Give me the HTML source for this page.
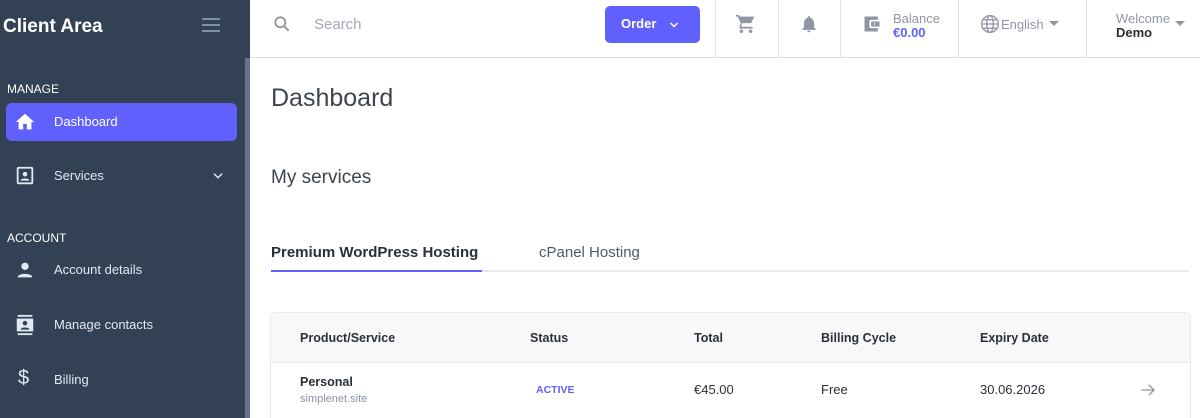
<!DOCTYPE html>
<html style="width:1200px;height:418px;overflow:hidden"><head><meta charset="utf-8"><style>
*{margin:0;padding:0;box-sizing:border-box}
body{width:1200px;height:418px;overflow:hidden;font-family:"Liberation Sans",sans-serif;background:#fff;position:relative}
.sb{position:absolute;left:0;top:0;width:250px;height:418px;background:#334155;color:#e2e8f0}
.sb .scroll{position:absolute;left:245px;top:58px;width:5px;height:360px;background:#64748b}
.logo{position:absolute;left:3px;top:16px;font-size:19px;font-weight:bold;color:#fff}
.ham{position:absolute;left:202px;top:18px;width:18px}
.ham i{display:block;height:2px;background:#7b8eab;margin-bottom:4px}
.sec{position:absolute;left:7px;font-size:12px;color:#fff}
.item{position:absolute;left:6px;width:231px;height:38px;border-radius:6px;font-size:13px;color:#e2e8f0}
.item span{position:absolute;left:48px;top:11px}
.item svg{position:absolute;left:8px;top:8px}
.active{background:#6061fd;color:#fff}
.top{position:absolute;left:250px;top:0;width:950px;height:58px;border-bottom:1px solid #dde3ec}
.vl{position:absolute;top:0;width:1px;height:58px;background:#dde3ec}
.t{position:absolute;color:#9096a6;font-size:13px}
.order{position:absolute;left:355px;top:6px;width:95px;height:37px;background:#6061fd;border-radius:5px;color:#fff;font-size:13px;font-weight:bold}
h1{position:absolute;left:271px;top:84px;font-size:25px;font-weight:normal;color:#3f4450}
h2{position:absolute;left:271px;top:167px;font-size:19px;font-weight:normal;color:#3f4450}
.tab{position:absolute;top:244px;font-size:15px;color:#52586a}
.card{position:absolute;left:270px;top:312px;width:921px;height:106px;border:1px solid #e6e9ef;border-bottom:none;border-radius:5px 5px 0 0;overflow:hidden}
.th{height:50px;background:#f8f8f9;border-bottom:1px solid #e6e9ef;position:relative}
.c{position:absolute;font-size:12.5px;color:#2b2f3a}
</style></head><body>
<div class="sb">
<div class="scroll"></div>
<div class="logo">Client Area</div>
<div class="ham"><i></i><i></i><i></i></div>
<div class="sec" style="top:82px">MANAGE</div>
<div class="item active" style="top:103px"><svg width="22" height="22" viewBox="0 0 24 24"><path d="M10 20v-6h4v6h5v-8h3L12 3 2 12h3v8z" fill="#fff"/></svg><span>Dashboard</span></div>
<div class="item" style="top:157px"><svg width="22" height="22" viewBox="0 0 24 24"><rect x="4" y="3" width="16" height="17" rx="1" fill="none" stroke="#e2e8f0" stroke-width="2"/><circle cx="12" cy="10" r="2.5" fill="#e2e8f0"/><path d="M7 17c1-3 9-3 10 0z" fill="#e2e8f0"/></svg><span>Services</span><svg style="left:205px;top:12px" width="14" height="14" viewBox="0 0 24 24"><path d="M5 8l7 7 7-7" fill="none" stroke="#e2e8f0" stroke-width="2.5"/></svg></div>
<div class="sec" style="top:231px">ACCOUNT</div>
<div class="item" style="top:251px"><svg width="22" height="22" viewBox="0 0 24 24"><circle cx="12" cy="8" r="4" fill="#e2e8f0"/><path d="M4 20c0-5 16-5 16 0z" fill="#e2e8f0"/></svg><span>Account details</span></div>
<div class="item" style="top:306px"><svg width="22" height="22" viewBox="0 0 24 24"><rect x="3" y="5" width="18" height="14" fill="#e2e8f0"/><rect x="4" y="1" width="16" height="2" fill="#e2e8f0"/><rect x="4" y="21" width="16" height="2" fill="#e2e8f0"/><circle cx="12" cy="10" r="2.5" fill="#334155"/><path d="M7 17c1-3 9-3 10 0z" fill="#334155"/></svg><span>Manage contacts</span></div>
<div class="item" style="top:361px"><span style="left:12px;top:6px;font-size:20px">$</span><span>Billing</span></div>
</div>
<div class="top">
<svg style="position:absolute;left:22px;top:14px" width="20" height="20" viewBox="0 0 24 24"><circle cx="10" cy="10" r="6" fill="none" stroke="#9096a6" stroke-width="2.2"/><path d="M15 15l5 5" stroke="#9096a6" stroke-width="2.4"/></svg>
<div class="t" style="left:64px;top:16px;font-size:15px;color:#a3a8b6">Search</div>
<div class="order"><span style="position:absolute;left:16px;top:10px">Order</span><svg style="position:absolute;left:63px;top:13px" width="12" height="12" viewBox="0 0 24 24"><path d="M5 8l7 7 7-7" fill="none" stroke="#fff" stroke-width="3"/></svg></div>
<div class="vl" style="left:465px"></div>
<svg style="position:absolute;left:485px;top:13px" width="22" height="22" viewBox="0 0 24 24"><path d="M7 18a2 2 0 1 0 .01 0M17 18a2 2 0 1 0 .01 0M1 2h3.3l.9 2H21l-3.5 7H8.1l-.9 1.6V15h12v2H5v-3l1.4-2.5L3 4H1z" fill="#9096a6"/></svg>
<div class="vl" style="left:528px"></div>
<svg style="position:absolute;left:549px;top:13px" width="20" height="22" viewBox="0 0 24 24"><path d="M12 22a2 2 0 0 0 2-2h-4a2 2 0 0 0 2 2zm6-6v-5c0-3-1.6-5.6-4.5-6.3V4a1.5 1.5 0 0 0-3 0v.7C7.6 5.4 6 8 6 11v5l-2 2v1h16v-1z" fill="#9096a6"/></svg>
<div class="vl" style="left:590px"></div>
<svg style="position:absolute;left:612px;top:14px" width="20" height="20" viewBox="0 0 24 24"><path d="M3 3h16v4H11a2 2 0 0 0-2 2v6a2 2 0 0 0 2 2h8v4H3zM11 9h10v6H11zm4 2a1 1 0 1 0 .01 0" fill="#9096a6"/></svg>
<div class="t" style="left:643px;top:11px">Balance</div>
<div class="t" style="left:643px;top:25px;color:#6061fd;font-weight:bold">€0.00</div>
<div class="vl" style="left:708px"></div>
<svg style="position:absolute;left:730px;top:14px" width="20" height="20" viewBox="0 0 24 24"><g fill="none" stroke="#9096a6" stroke-width="1.6"><circle cx="12" cy="12" r="10"/><ellipse cx="12" cy="12" rx="4" ry="10"/><path d="M2 12h20M4 7h16M4 17h16"/></g></svg>
<div class="t" style="left:751px;top:17px">English</div>
<svg style="position:absolute;left:799px;top:21px" width="10" height="6"><path d="M0 0h10L5 5z" fill="#9096a6"/></svg>
<div class="vl" style="left:836px"></div>
<div class="t" style="left:866px;top:11px">Welcome</div>
<div class="t" style="left:866px;top:25px;color:#2b2f3a;font-weight:bold">Demo</div>
<svg style="position:absolute;left:925px;top:21px" width="10" height="6"><path d="M0 0h10L5 5z" fill="#9096a6"/></svg>
</div>
<h1>Dashboard</h1>
<h2>My services</h2>
<div class="tab" style="left:271px;color:#2b2f3a;font-weight:bold">Premium WordPress Hosting</div>
<div class="tab" style="left:539px">cPanel Hosting</div>
<div style="position:absolute;left:271px;top:270px;width:918px;height:2px;background:#e6e9ef"></div>
<div style="position:absolute;left:271px;top:270px;width:211px;height:2px;background:#6061fd"></div>
<div class="card">
<div class="th">
<div class="c" style="left:29px;top:18px;font-weight:bold">Product/Service</div>
<div class="c" style="left:259px;top:18px;font-weight:bold">Status</div>
<div class="c" style="left:423px;top:18px;font-weight:bold">Total</div>
<div class="c" style="left:550px;top:18px;font-weight:bold">Billing Cycle</div>
<div class="c" style="left:709px;top:18px;font-weight:bold">Expiry Date</div>
</div>
<div class="c" style="left:29px;top:62px;font-weight:bold">Personal</div>
<div class="c" style="left:29px;top:80px;font-size:11px;color:#8c93a6">simplenet.site</div>
<div class="c" style="left:265px;top:71px;font-size:10.5px;font-weight:bold;color:#6061fd">ACTIVE</div>
<div class="c" style="left:423px;top:69px;font-size:13px">€45.00</div>
<div class="c" style="left:550px;top:69px;font-size:13px">Free</div>
<div class="c" style="left:709px;top:69px;font-size:13px">30.06.2026</div>
<svg style="position:absolute;left:868px;top:68px" width="18" height="18" viewBox="0 0 24 24"><path d="M3 12h17M13 5l7 7-7 7" fill="none" stroke="#9096a6" stroke-width="1.8"/></svg>
</div>
</body></html>
